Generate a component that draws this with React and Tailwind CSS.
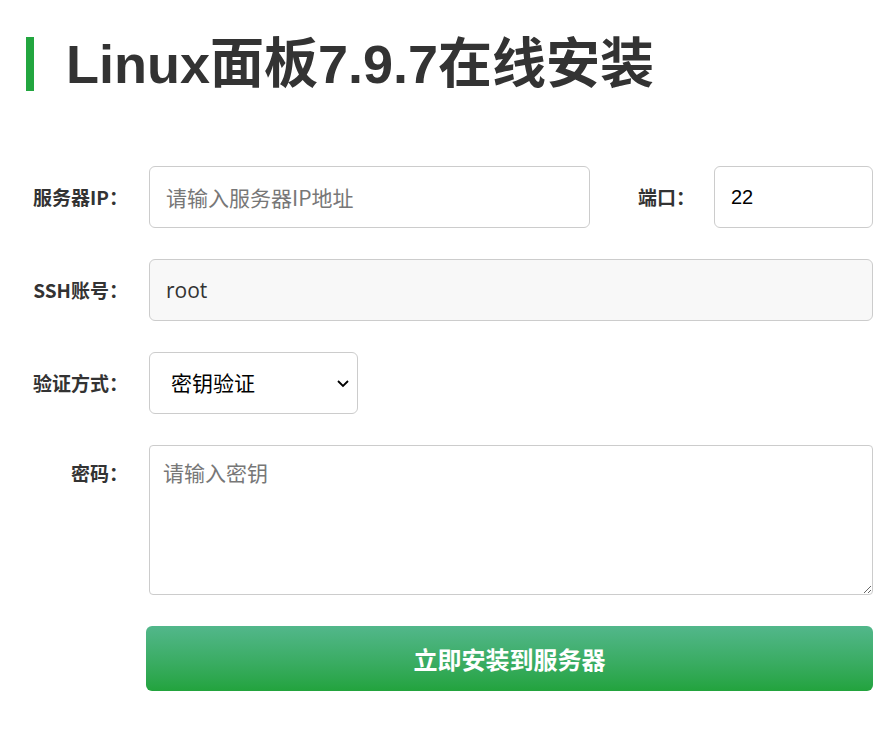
import { useState } from "react";

const Label = ({ children, className = "" }) => (
  <label
    className={
      "w-[128px] shrink-0 text-right text-[19px] font-bold text-[#333] " +
      className
    }
  >
    {children}
  </label>
);

const App = () => {
  const [port, setPort] = useState("22");
  const [method, setMethod] = useState("key");

  return (
    <div
      className="min-h-[740px] w-[895px] bg-white pt-[37px]"
      style={{ fontFamily: '"Noto Sans CJK SC", sans-serif' }}
    >
      <div className="flex items-center">
        <div className="ml-[26px] h-[54px] w-[8px] bg-[#22a63f]" />
        <h1
          className="ml-[32px] text-[54px] font-bold leading-[54px] text-[#333]"
          style={{ fontFamily: '"Liberation Sans", "Noto Sans CJK SC", sans-serif' }}
        >
          Linux面板7.9.7在线安装
        </h1>
      </div>

      <div className="mt-[75px] flex flex-col gap-[31px]">
        <div className="flex h-[62px] items-center">
          <Label>服务器IP：</Label>
          <input
            type="text"
            placeholder="请输入服务器IP地址"
            className="ml-[21px] h-full w-[441px] rounded-md border border-[#ccc] px-[16px] text-[21px] text-[#333] outline-none placeholder:text-[#777]"
          />
          <label className="ml-[48px] w-[59px] text-[19px] font-bold text-[#333]">
            端口：
          </label>
          <input
            type="text"
            value={port}
            onChange={(e) => setPort(e.target.value)}
            className="ml-[17px] h-full w-[159px] rounded-md border border-[#ccc] px-[16px] text-[20px] text-black outline-none"
            style={{ fontFamily: '"Liberation Sans", sans-serif' }}
          />
        </div>

        <div className="flex h-[62px] items-center">
          <Label>SSH账号：</Label>
          <input
            type="text"
            value="root"
            disabled
            className="ml-[21px] h-full w-[724px] rounded-md border border-[#ccc] bg-[#f8f8f8] px-[16px] text-[21px] text-[#333]"
            style={{ fontFamily: '"Open Sans", sans-serif' }}
          />
        </div>

        <div className="flex h-[62px] items-center">
          <Label>验证方式：</Label>
          <div className="relative ml-[21px] h-full w-[209px]">
            <select
              value={method}
              onChange={(e) => setMethod(e.target.value)}
              className="h-full w-full appearance-none rounded-md border border-[#ccc] bg-white pl-[21px] text-[21px] text-black outline-none"
            >
              <option value="key">密钥验证</option>
              <option value="pwd">密码验证</option>
            </select>
            <svg
              className="pointer-events-none absolute right-[7px] top-1/2 -translate-y-1/2"
              width="16"
              height="16"
              viewBox="0 0 16 16"
            >
              <path
                d="M3 6 L8 11 L13 6"
                fill="none"
                stroke="#000"
                strokeWidth="1.8"
              />
            </svg>
          </div>
        </div>

        <div className="flex items-start">
          <Label className="pt-[14px]">密码：</Label>
          <textarea
            placeholder="请输入密钥"
            className="ml-[21px] h-[150px] w-[724px] rounded-sm border border-[#ccc] px-[13px] py-[11px] text-[21px] text-[#333] outline-none placeholder:text-[#777]"
          />
        </div>

        <div className="flex">
          <button className="ml-[146px] h-[65px] w-[727px] rounded-md bg-gradient-to-b from-[#52b78b] to-[#22a33d] text-[24px] font-bold text-white">
            立即安装到服务器
          </button>
        </div>
      </div>
    </div>
  );
};

export default App;
